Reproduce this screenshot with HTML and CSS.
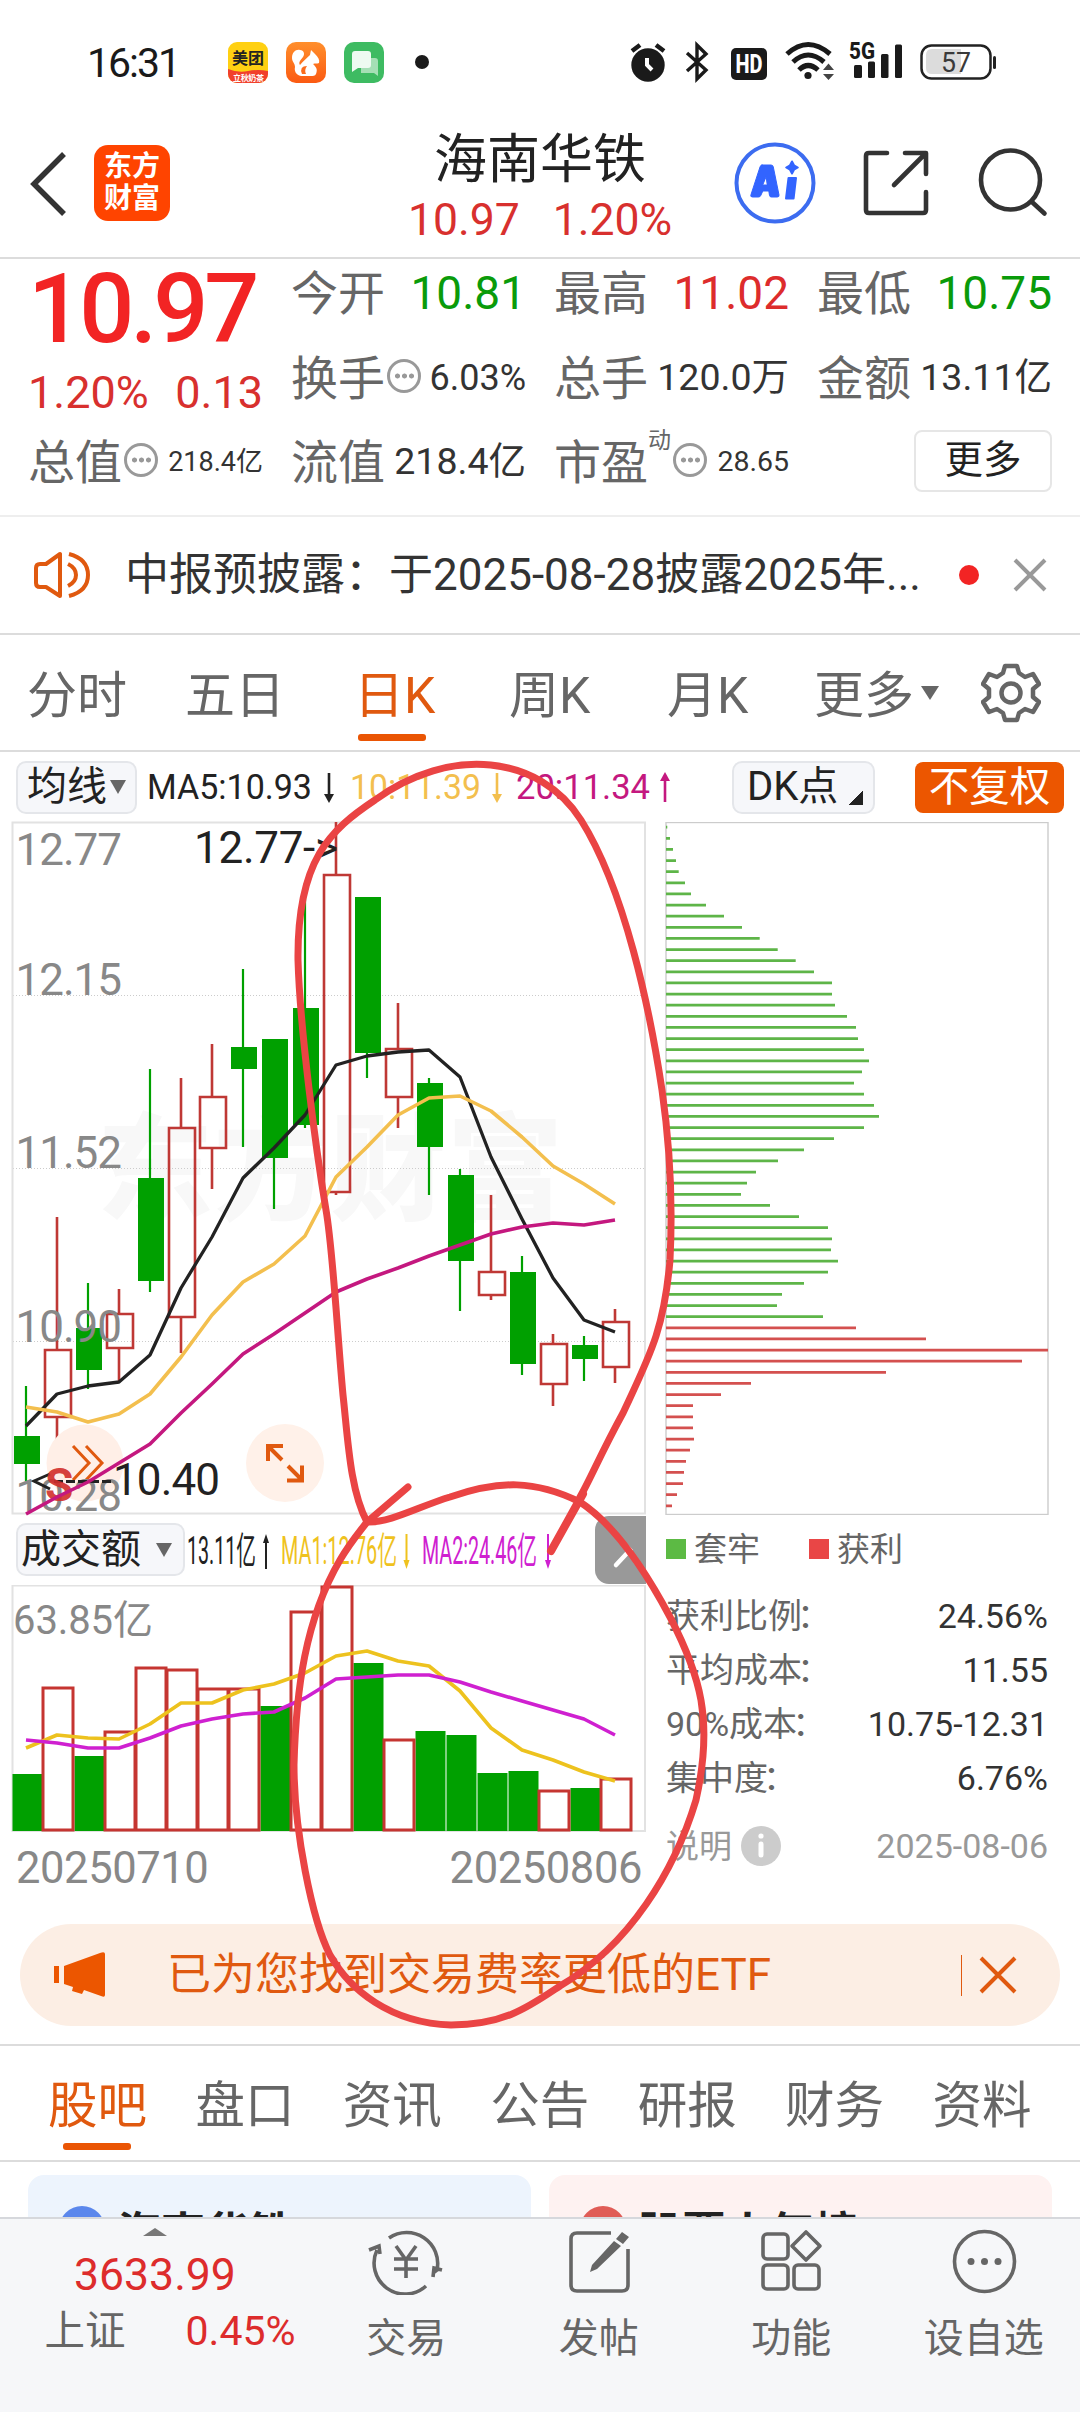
FILE: index.html
```html
<!DOCTYPE html>
<html lang="zh-CN">
<head>
<meta charset="utf-8">
<title>海南华铁 10.97 1.20%</title>
<link rel="stylesheet" href="styles.css">
</head>
<body>
<div class="screen">

<div class="status">
  <span class="clock">16:31</span>
  <svg class="notes" width="210" height="60" viewBox="220 32 210 60">
    <defs>
      <linearGradient id="uc" x1="0" x2="0" y1="0" y2="1"><stop offset="0" stop-color="#ff8f2c"/><stop offset="1" stop-color="#fb5a12"/></linearGradient>
      <clipPath id="mt"><rect x="228" y="42" width="40" height="41" rx="9"/></clipPath>
    </defs>
    <g clip-path="url(#mt)">
      <rect x="228" y="42" width="40" height="41" fill="#ffd012"/>
      <path d="M228 69q10 4 20 2t20 0v12h-40z" fill="#f1402c"/>
    </g>
    <text x="232" y="64" font-size="16" font-weight="700" textLength="32" fill="#222">美团</text>
    <text x="233" y="81" font-size="8" font-weight="700" textLength="31" fill="#fff">立秋奶茶</text>
    <rect x="286" y="42" width="40" height="41" rx="10" fill="url(#uc)"/>
    <path d="M292 58c0-6 4-9 8-8 4 0 5 4 3 7-2 3-5 5-3 8 3-4 7-7 10-10l1-5 4 4c3 3 5 6 4 9-2 1-4 0-6 1 3 3 5 5 3 10-1 2-3 2-5 2h-10c-5-1-7-5-6-9 0-4-3-5-3-9z" fill="#fff"/>
    <path d="M302 74q-3-8 5-8-3 4-1 8z" fill="#fb6c1c"/>
    <rect x="344" y="42" width="40" height="41" rx="10" fill="#3ebb62"/>
    <path d="M361 58h14a3 3 0 0 1 3 3v15l-4-3h-13z" fill="#a5dfb5"/>
    <path d="M355 51h13a3 3 0 0 1 3 3v11a3 3 0 0 1-3 3h-10l-6 4v-18a3 3 0 0 1 3-3z" fill="#eefaf1"/>
    <circle cx="422" cy="62" r="7" fill="#1a1a1a"/>
  </svg>
  <svg class="signals" width="380" height="60" viewBox="620 32 380 60">
    <g fill="#1a1a1a">
      <circle cx="648" cy="65" r="16.7"/>
      <path d="M632 51l8-6M664 51l-8-6" stroke="#1a1a1a" stroke-width="4.5" fill="none"/>
      <path d="M647 58v7l5 5" stroke="#fff" stroke-width="4" fill="none"/>
      <path d="M687 53l19 17-9 9V45l9 9-19 17" fill="none" stroke="#1a1a1a" stroke-width="3.4"/>
      <rect x="731" y="48" width="36" height="32" rx="5"/>
      <g fill="none" stroke="#1a1a1a" stroke-width="5"><path d="M787 54q21-19 43 0M793 62q15-14 31 0M799 70q9-9 19 0"/></g>
      <circle cx="808" cy="75.500" r="3.600"/>
      <path d="M823 70h11l-5.500-6.500zM823 74h11l-5.500 6z" fill="#444"/>
      <rect x="854" y="65" width="8" height="13" rx="1.500"/><rect x="868" y="61.500" width="7" height="16.500" rx="1.500"/><rect x="881" y="54" width="7.500" height="24" rx="1.500"/><rect x="895" y="44.500" width="7" height="33.500" rx="1.500"/>
    </g>
    <text x="735.500" y="73" font-size="25" font-weight="800" fill="#fff" textLength="27" lengthAdjust="spacingAndGlyphs">HD</text>
    <text x="849" y="59" font-size="23" font-weight="800" fill="#1a1a1a" textLength="26" lengthAdjust="spacingAndGlyphs">5G</text>
    <rect x="921.500" y="45.500" width="69" height="33" rx="10" fill="#fff" stroke="#222" stroke-width="2.500"/>
    <path d="M932 49h29v25h-29q-6 0-6-6v-13q0-6 6-6z" fill="#dcdcdc"/>
    <rect x="993" y="56" width="3" height="13" rx="1.500" fill="#222"/>
    <text x="941" y="72" font-size="27" fill="#3a3a3a" textLength="30" lengthAdjust="spacingAndGlyphs">57</text>
  </svg>
</div>

<header class="top">
  <svg class="back" width="42" height="70" viewBox="0 0 42 70"><path d="M36 5L6 35l30 30" fill="none" stroke="#333" stroke-width="5.500"/></svg>
  <div class="logo"><span>东方</span><span>财富</span></div>
  <div class="title"><h1>海南华铁</h1><p><span>10.97</span><span>1.20%</span></p></div>
  <svg class="tools" width="330" height="100" viewBox="730 133 330 100" fill="none" stroke-linecap="round" stroke-linejoin="round">
    <circle cx="775" cy="183" r="38.500" stroke="#3c6cf0" stroke-width="4"/>
    <path fill-rule="evenodd" d="M762 165h9q2 0 2.300 2l5.700 28q.3 2-1.700 2h-6q-1.500 0-1.800-1.600l-.7-4.400h-6l-2 4.400q-.6 1.600-2.300 1.600h-6q-2.500 0-1.500-2.400l9-27.600q.5-2 2-2zM766 177l-3.300 8h4.300z" fill="#3264ff" stroke="#3264ff"/>
    <path d="M788.500 178h7.500l-2.400 20.500h-7.600zM792 161.500l2 3.800 3.800 2.200-3.800 2.200-2 3.800-2-3.800-3.800-2.200 3.800-2.200z" fill="#3264ff" stroke="#3264ff" stroke-width="2"/>
    <path d="M887 153h-18q-3 0-3 3v54q0 3 3 3h54q3 0 3-3v-18M905 153h21v21M925 154l-31 31" stroke="#333" stroke-width="4.600"/>
    <circle cx="1010.500" cy="180" r="29.500" stroke="#333" stroke-width="4.600"/><path d="M1032 202l12.500 11.500" stroke="#333" stroke-width="4.600"/>
  </svg>
</header>

<section class="quote">
  <div class="price"><b>10.97</b><p><span>1.20%</span><span>0.13</span></p></div>
  <div class="cell"><label>今开</label><i class="down">10.81</i></div>
  <div class="cell"><label>最高</label><i class="up">11.02</i></div>
  <div class="cell"><label>最低</label><i class="down">10.75</i></div>
  <div class="cell"><label>换手</label><span class="tip"></span><i class="mid rate">6.03%</i></div>
  <div class="cell"><label>总手</label><i class="mid">120.0万</i></div>
  <div class="cell"><label>金额</label><i class="mid">13.11亿</i></div>
  <div class="cell"><label>总值</label><span class="tip"></span><i class="small">218.4亿</i></div>
  <div class="cell"><label>流值</label><i class="mid">218.4亿</i></div>
  <div class="cell"><label>市盈</label><sup>动</sup><span class="tip pe"></span><i class="small pe">28.65</i></div>
  <div class="cell end"><span class="more">更多</span></div>
</section>

<section class="notice">
  <svg width="58" height="48" viewBox="33 551 58 48" fill="none" stroke="#e0590f" stroke-width="4" stroke-linejoin="round"><path d="M60 554v42l-14-9h-6q-4 0-4-4v-15q0-4 4-4h6zM68 564q8 4 8 11t-8 11M69 554q19 5 19 21t-19 21"/></svg>
  <p>中报预披露：于2025-08-28披露2025年...</p>
  <span class="dot"></span>
  <svg class="x" width="34" height="34" viewBox="0 0 34 34"><path d="M2 2l30 30M32 2L2 32" stroke="#999" stroke-width="4"/></svg>
</section>

<nav class="periods">
  <span>分时</span><span>五日</span><span class="on">日K</span><span>周K</span><span>月K</span><span class="drop">更多</span>
  <svg width="60" height="60" viewBox="-30 -30 60 60" fill="none" stroke="#666" stroke-width="4.500" stroke-linejoin="round"><path d="M-6-27H6L8-20 14-16 22-19 28-9 22-4V4L28 9 22 19 14 16 8 20 6 27H-6L-8 20-14 16-22 19-28 9-22 4V-4L-28-9-22-19-14-16-8-20Z"/><circle r="9.500"/></svg>
</nav>

<section class="market">
<div class="indicators">
  <span class="pill ma">均线<em></em></span>
  <svg width="540" height="50" viewBox="140 762 540 50" font-size="35">
    <text x="147" y="799" fill="#222" textLength="165" lengthAdjust="spacingAndGlyphs">MA5:10.93</text>
    <text x="350" y="799" fill="#f3bf4e" textLength="131" lengthAdjust="spacingAndGlyphs">10:11.39</text>
    <text x="516" y="799" fill="#c4187f" textLength="134" lengthAdjust="spacingAndGlyphs">20:11.34</text>
    <g stroke-width="2.600"><path d="M329 773v23" stroke="#222"/><path d="M497 773v23" stroke="#f3bf4e"/><path d="M665 802v-23" stroke="#c4187f"/></g>
    <path d="M324 794h10l-5 9z" fill="#222"/><path d="M492 794h10l-5 9z" fill="#f3bf4e"/><path d="M660 781h10l-5-9z" fill="#c4187f"/>
  </svg>
  <span class="pill dk">DK点<em></em></span>
  <span class="fq">不复权</span>
</div>

<div class="panels">
<div class="left">
<svg class="kline" width="660" height="692" viewBox="0 822 660 692">
  <text x="97" y="1211" font-size="116" font-weight="900" fill="#f8f8f8" textLength="466">东方财富</text>
  <path d="M13 995.500h632M13 1168.500h632M13 1341.500h632" stroke="#ccc" stroke-width="1" stroke-dasharray="1 2"/>
  <rect x="12.500" y="822.500" width="632.500" height="691" fill="none" stroke="#e2e2e2" stroke-width="2"/>
  <g stroke="#00a000" stroke-width="2.200"><path d="M26 1386v95M88 1283v106M150 1069v223M243 969v178M274 1039v170M305 883v245M367 897v181M429 1078v117M460 1169v142M522 1256v119M584 1336v45"/></g>
  <g fill="#00a000"><path d="M14 1436h26v28H14zM76 1328h26v42H76zM138 1178h26v103h-26zM231 1047h26v22h-26zM262 1039h26v119h-26zM293 1008h26v117h-26zM355 897h26v156h-26zM417 1083h26v64h-26zM448 1175h26v86h-26zM510 1272h26v92h-26zM572 1345h26v14h-26z"/></g>
  <g stroke="#bf3835" stroke-width="2.600" fill="none"><path d="M57 1217v133M57 1417v44M119 1289v25M119 1348v34M181 1078v50M181 1317v36M212 1044v53M212 1148v41M336 822v52M336 1192v3M398 1003v46M398 1097v31M491 1195v77M491 1295v5M553 1334v10M553 1384v22M615 1309v13M615 1367v16"/>
  <path d="M45 1350h26v67H45zM107 1314h26v34h-26zM169 1128h26v189h-26zM200 1097h26v51h-26zM324 875h26v317h-26zM386 1049h26v48h-26zM479 1272h26v23h-26zM541 1344h26v40h-26zM603 1322h26v45h-26z"/></g>
  <circle cx="85" cy="1463" r="38.500" fill="#ffefe7"/><circle cx="285" cy="1463" r="39" fill="#fff1e9"/>
  <path d="M73 1446l16 17-16 17M86 1446l16 17-16 17" stroke="#e0590f" stroke-width="3" fill="none"/>
  <text x="15.500" y="865" class="ax">12.77</text><text x="15.500" y="995" class="ax">12.15</text><text x="15.500" y="1168" class="ax">11.52</text><text x="15.500" y="1342" class="ax">10.90</text><text x="15.500" y="1511" class="ax">10.28</text>
  <text x="194" y="863" font-size="44" fill="#222" textLength="144">12.77-&gt;</text>
  <path d="M50 1474l-16 7 16 8" fill="none" stroke="#222" stroke-width="3"/><path d="M54 1481.500h60" stroke="#222" stroke-width="3" stroke-dasharray="9 3"/>
  <text x="113" y="1495" font-size="44" fill="#222" textLength="107">10.40</text>
  <text x="45" y="1501" font-size="46" font-weight="700" fill="#d2302c" fill-opacity=".92">S</text>
  <g fill="none" stroke-width="3.600" stroke-linejoin="round">
  <polyline stroke="#222" stroke-width="3.300" points="26,1426 57,1394 88,1386 119,1382 150,1355 181,1288 212,1237 243,1178 274,1148 305,1115 336,1065 367,1056 398,1052 429,1050 460,1077 491,1157 522,1219 553,1278 584,1320 615,1332"/>
  <polyline stroke="#f3bf4e" points="26,1407 57,1412 88,1422 119,1414 150,1394 181,1357 212,1315 243,1282 274,1264 305,1236 336,1177 367,1147 398,1115 429,1098 460,1096 491,1111 522,1137 553,1166 584,1184 615,1204"/>
  <polyline stroke="#c4187f" points="26,1514 57,1497 88,1482 119,1463 150,1444 181,1413 212,1384 243,1354 274,1334 305,1313 336,1292 367,1279 398,1268 429,1256 460,1245 491,1234 522,1227 553,1223 584,1225 615,1220"/></g>
  <path d="M283 1446h-15v15M268 1446l14 14M288 1466l14 14M287 1480.500h15v-15" fill="none" stroke="#e0590f" stroke-width="4"/>
</svg>

<div class="volhead">
  <span class="pill vol">成交额<em></em></span>
  <svg width="370" height="50" viewBox="186 1524 370 50" font-size="38">
    <text x="187" y="1563" fill="#222" textLength="69" lengthAdjust="spacingAndGlyphs">13.11亿</text>
    <text x="281" y="1563" fill="#efc21e" textLength="116" lengthAdjust="spacingAndGlyphs">MA1:12.76亿</text>
    <text x="422" y="1563" fill="#cf20d0" textLength="115" lengthAdjust="spacingAndGlyphs">MA2:24.46亿</text>
    <g stroke-width="2"><path d="M266 1568v-28" stroke="#222"/><path d="M406.500 1533v28" stroke="#efc21e"/><path d="M548 1533v28" stroke="#cf20d0"/></g>
    <path d="M263 1542h6l-3-9z" fill="#222"/><path d="M403.500 1559h6l-3 9z" fill="#efc21e"/><path d="M545 1559h6l-3 9z" fill="#cf20d0"/>
  </svg>
  <span class="next"><svg width="24" height="38" viewBox="0 0 24 38"><path d="M4 4l14 15L4 34" fill="none" stroke="#fff" stroke-width="4.500" stroke-linecap="round"/></svg></span>
</div>

<svg class="volume" width="660" height="247" viewBox="0 1585 660 247">
  <rect x="12.500" y="1585.500" width="632.500" height="245.500" fill="none" stroke="#e2e2e2" stroke-width="2"/>
  <path fill="#00a000" d="M12.500 1774h30v57h-30zM74.500 1756h30v75h-30zM260.500 1706h30v125h-30zM353.500 1663h30v168h-30zM415.500 1731h30v100h-30zM446.500 1735h30v96h-30zM477.500 1773h30v58h-30zM508.500 1771h30v60h-30zM570.500 1788h30v43h-30z"/>
  <path fill="none" stroke="#c53531" stroke-width="3" d="M43 1688h30v142H43zM105 1732h30v98h-30zM136 1668h30v162h-30zM167 1670h30v160h-30zM198 1689h30v141h-30zM229 1689h30v141h-30zM291 1612h30v218h-30zM322 1587h30v243h-30zM384 1740h30v90h-30zM539 1791h30v39h-30zM601 1779h30v51h-30z"/>
  <text x="13" y="1634" font-size="40" fill="#888" textLength="140">63.85亿</text>
  <g fill="none" stroke-width="3.600" stroke-linejoin="round">
  <polyline stroke="#edc21e" points="26,1748 57,1735 88,1738 119,1739 150,1724 181,1703 212,1703 243,1690 274,1684 305,1673 336,1656 367,1651 398,1661 429,1666 460,1691 491,1728 522,1750 553,1760 584,1772 615,1781"/>
  <polyline stroke="#cf20d0" points="26,1740 57,1743 88,1748 119,1748 150,1738 181,1726 212,1719 243,1714 274,1712 305,1698 336,1679 367,1677 398,1675 429,1675 460,1682 491,1692 522,1701 553,1710 584,1719 615,1735"/></g>
</svg>
<div class="dates"><span>20250710</span><span>20250806</span></div>
</div>

<div class="right">
<svg width="400" height="693" viewBox="660 822 400 693">
  <rect x="666" y="822.500" width="382" height="692" fill="none" stroke="#ccc" stroke-width="1.400"/>
  <path fill="none" stroke="#5eb548" stroke-width="2.800" d="M666 827.200h1.300m-1.300 11.125h4m-4 11.125h7m-7 11.125h10m-10 11.125h12.700m-12.700 11.125h19m-19 11.125h25m-25 11.125h40m-40 11.125h58m-58 11.125h76m-76 11.125h93.700m-93.700 11.125h111.700m-111.700 11.125h129.700m-129.700 11.125h148m-148 11.125h166m-166 11.125h166m-166 11.125h169m-169 11.125h181m-181 11.125h190m-190 11.125h192m-192 11.125h198m-198 11.125h203m-203 11.125h196m-196 11.125h188m-188 11.125h198m-198 11.125h208m-208 11.125h213m-213 11.125h198m-198 11.125h168m-168 11.125h138m-138 11.125h112m-112 11.125h90m-90 11.125h81m-81 11.125h75m-75 11.125h104m-104 11.125h133m-133 11.125h162m-162 11.125h166m-166 11.125h165m-165 11.125h172m-172 11.125h162m-162 11.125h138m-138 11.125h116m-116 11.125h111m-111 11.125h157"/>
  <path fill="none" stroke="#d4504f" stroke-width="2.800" d="M666 1327.800h190m-190 11.125h260m-260 11.125h382m-382 11.125h356m-356 11.125h220m-220 11.125h85m-85 11.125h55m-55 11.125h27m-27 11.125h27m-27 11.125h27m-27 11.125h28m-28 11.125h24m-24 11.125h20m-20 11.125h18m-18 11.125h17m-17 11.125h11m-11 11.125h6"/>
</svg>
<div class="legend"><span><i class="g"></i>套牢</span><span><i class="r"></i>获利</span></div>
<dl>
  <div><dt>获利比例<s>：</s></dt><dd>24.56%</dd></div>
  <div><dt>平均成本<s>：</s></dt><dd>11.55</dd></div>
  <div><dt>90%成本<s>：</s></dt><dd>10.75-12.31</dd></div>
  <div><dt>集中度<s>：</s></dt><dd>6.76%</dd></div>
</dl>
<div class="explain"><span>说明</span><svg width="40" height="40" viewBox="-20 -20 40 40"><circle r="20" fill="#ccc"/><path d="M0-2v11" stroke="#fff" stroke-width="5" stroke-linecap="round"/><circle cy="-10" r="2.600" fill="#fff"/></svg><time>2025-08-06</time></div>
</div>
</div>
</section>

<section class="banner">
  <svg width="52" height="46" viewBox="0 0 52 46" fill="#ec5600"><path d="M0 14h5v17H0zM10 14L46 1q5-2 5 1v41q0 3-4 1l-17-6-2 4-10-3 1-4-9-3z"/></svg>
  <p>已为您找到交易费率更低的ETF</p>
  <span class="bar"></span>
  <svg class="x" width="38" height="38" viewBox="0 0 38 38"><path d="M2 2l34 34M36 2L2 36" stroke="#e0590f" stroke-width="4"/></svg>
</section>

<nav class="tabs"><span class="on">股吧</span><span>盘口</span><span>资讯</span><span>公告</span><span>研报</span><span>财务</span><span>资料</span></nav>

<section class="cards">
  <div class="card blue"><i></i>海南华铁</div>
  <div class="card red"><i></i>股票人气榜</div>
</section>

<footer class="dock">
  <div class="index"><em></em><strong>3633.99</strong><p><span>上证</span><b>0.45%</b></p></div>
  <div class="item"><svg width="76" height="68" viewBox="368 2229 76 68" fill="none" stroke="#666" stroke-width="3.600"><path d="M389 2240a31 31 0 0 1 48 32l-4 3M433 2279l1-9 8 2M426 2288a31 31 0 0 1-49-36M369 2252l10-4 1 8M396 2248l10 14 10-14M406 2262v18M394 2261h24M394 2271h24"/></svg><span>交易</span></div>
  <div class="item"><svg width="76" height="68" viewBox="560 2229 76 68" fill="none" stroke="#666" stroke-width="3.600"><path d="M610 2235h-34q-6 0-6 6v46q0 6 6 6h45q6 0 6-6v-36"/><path d="M621 2234l7 5-6 7-7-5zM613 2243l7 5-24 23-7 3 2-7z" fill="#666" stroke="none"/></svg><span>发帖</span></div>
  <div class="item"><svg width="76" height="68" viewBox="753 2229 76 68" fill="none" stroke="#666" stroke-width="3.600" stroke-linejoin="round"><rect x="763" y="2236" width="25" height="25" rx="4"/><rect x="763" y="2267" width="25" height="24" rx="4"/><rect x="794" y="2267" width="25" height="24" rx="4"/><path d="M806 2234l14 14-14 14-14-14z"/></svg><span>功能</span></div>
  <div class="item"><svg width="76" height="68" viewBox="945 2229 76 68"><circle cx="983.500" cy="2263.500" r="30" fill="none" stroke="#666" stroke-width="3.600"/><g fill="#666"><circle cx="970" cy="2263.500" r="3.500"/><circle cx="983.500" cy="2263.500" r="3.500"/><circle cx="997" cy="2263.500" r="3.500"/></g></svg><span>设自选</span></div>
</footer>

<svg class="ink" width="1080" height="2412" viewBox="0 0 1080 2412" fill="none" stroke="#ea4444" stroke-width="7" stroke-linecap="round" stroke-linejoin="round">
  <path d="M367 1522C350 1490 348 1440 343 1395C337 1330 333 1250 326 1210C316 1150 300 1030 298 960C297 860 330 830 375 800C450 745 540 755 581 820C625 890 650 1010 662 1090C672 1160 672 1220 670 1260C664 1330 650 1355 623 1413C600 1455 590 1480 580 1497"/>
  <path d="M367 1522L408 1487"/>
  <path d="M367 1522C390 1523 420 1506 450 1497C500 1480 535 1480 580 1502C615 1525 645 1570 670 1617C700 1675 714 1720 696 1800C675 1870 630 1945 560 1986C530 2006 505 2025 451 2025C390 2023 350 1990 330 1955C312 1920 294 1830 294 1765C296 1690 305 1620 340 1560C350 1543 357 1535 367 1522"/>
  <path d="M583 1494L551 1551L576 1506z" stroke-width="8"/>
</svg>
</div>
</body>
</html>
```
FILE: styles.css
```css
* { box-sizing: border-box; margin: 0; padding: 0; }
body { background: #fff; font-family: Roboto, "Noto Sans CJK SC", sans-serif; line-height: 1; color: #333; }
i, em { font-style: normal; }
svg { display: block; flex: none; }
.screen { position: relative; width: 1080px; height: 2412px; overflow: hidden; display: flex; flex-direction: column; white-space: nowrap; }
.screen > * { flex: none; }

.status { height: 94px; display: flex; align-items: flex-end; padding: 0 80px 2px 87px; }
.clock { font-size: 41px; letter-spacing: -2px; color: #1a1a1a; width: 133px; padding-bottom: 8px; }
.signals { margin-left: auto; }

.top { height: 165px; border-bottom: 2px solid #dcdcdc; display: flex; align-items: center; padding: 10px 20px 0 28px; }
.back { margin-right: 24px; margin-top: 6px; }
.logo { width: 76px; height: 76px; margin-top: 4px; border-radius: 14px; background: #ff4400; color: #fff; display: flex; flex-direction: column; align-items: center; justify-content: center; gap: 4px; font-size: 28px; font-weight: 700; }
.title { width: 560px; text-align: center; display: flex; flex-direction: column; gap: 11px; padding-left: 180px; margin-top: 16px; align-items: center; }
.title h1 { font-size: 53px; font-weight: 400; color: #222; }
.title p { display: flex; gap: 33px; font-size: 44.500px; color: #d8302e; }
.tools { margin-left: auto; margin-top: 4px; }

.quote { height: 258px; border-bottom: 2px solid #eee; display: grid; grid-template-columns: repeat(4, 235px); column-gap: 28px; grid-template-rows: 68px 102px 66px; padding-left: 28px; }
.price { grid-row: 1 / 3; color: #d8302e; }
.price b { display: block; font-size: 97px; font-weight: 500; letter-spacing: -4px; color: #f22424; margin-top: 2px; }
.price p { display: flex; justify-content: space-between; font-size: 45px; margin-top: 12px; }
.cell { display: flex; align-items: center; }
.cell label { font-size: 47px; color: #666; }
.cell i { margin-left: auto; font-size: 46px; color: #333; }
.cell .down { color: #0a9b0a; }
.cell .up { color: #dd2c2c; }
.cell .mid { font-size: 37.500px; }
.cell .rate { font-size: 36px; }
.cell .small { font-size: 27px; }
.cell .small.pe { font-size: 28.500px; }
.cell.end { justify-content: flex-end; }
.tip { width: 34px; height: 34px; border: 3px solid #999; border-radius: 50%; margin: -5px 0 0 2px; background: radial-gradient(circle at 50% 50%, #999 2.2px, transparent 2.8px) 0 0 / 7px 100% repeat-x content-box; padding: 0 3.500px; }
.cell sup { font-size: 23px; color: #666; align-self: flex-start; }
.tip.pe { margin-left: 2px; }
.more { width: 138px; height: 62px; border: 2px solid #e6e6e6; border-radius: 8px; margin-top: -3px; font-size: 38.500px; color: #222; display: flex; align-items: center; justify-content: center; }

.notice { height: 118px; border-bottom: 2px solid #dcdcdc; display: flex; align-items: center; padding-left: 33px; }
.notice p { font-size: 44px; margin-left: 34px; width: 834px; }
.dot { width: 20px; height: 20px; border-radius: 50%; background: #f22424; }
.notice .x { margin-left: 34px; }

.periods { height: 117px; border-bottom: 2px solid #dcdcdc; display: flex; align-items: center; padding-left: 27px; font-size: 50px; color: #666; }
.periods span { width: 160px; position: relative; top: 3px; }
.periods span:nth-child(1) { width: 158px; }
.periods span:nth-child(2) { width: 169px; }
.periods span:nth-child(3) { width: 155px; }
.periods span:nth-child(4) { width: 158px; }
.periods span:nth-child(5) { width: 147px; }
.periods span.drop { width: 167px; }
.periods .on, .tabs .on { color: #e0590f; }
.periods .on::after, .tabs .on::after { content: ""; position: absolute; left: 4px; bottom: -20px; width: 68px; height: 7px; border-radius: 3px; background: #ea5504; }
.drop::after { content: ""; position: absolute; left: 107px; top: 15px; border: 9px solid transparent; border-top: 14px solid #666; border-bottom: 0; }

.market { height: 1172px; }
.indicators { height: 70px; display: flex; align-items: center; padding-left: 16px; }
.pill { height: 53px; background: #f6f7fa; border: 2px solid #e4e6ea; border-radius: 10px; color: #222; font-size: 40px; display: flex; align-items: center; padding-left: 9px; }
.ma { width: 121px; }
.indicators svg { margin: -1px 0 0 3px; }
.pill em { border: 8px solid transparent; border-top: 14px solid #666; border-bottom: 0; margin-left: 3px; }
.dk { width: 143px; padding-left: 13px; margin-left: 52px; }
.dk em { border: 0; width: 15px; height: 14px; background: linear-gradient(135deg, transparent 50%, #222 50%); margin: 22px 0 0 10px; }
.fq { width: 149px; height: 51px; margin-left: 40px; border-radius: 8px; background: #ec5600; color: #fff; font-size: 40.500px; display: flex; align-items: center; justify-content: center; }
.panels { display: flex; }
.left, .right { display: flex; flex-direction: column; }
.kline .ax { font-size: 44px; fill: #888; letter-spacing: -1px; }
.kline { overflow: visible; }
.volhead { height: 71px; display: flex; align-items: center; width: 646px; padding-left: 16px; }
.vol { width: 169px; padding-left: 3px; }
.vol em { margin-left: 15px; }
.volhead > svg { margin-left: 1px; }
.next { margin-left: auto; align-self: flex-start; margin-top: 2px; width: 51px; height: 68px; border-radius: 14px 0 0 14px; background: #999; display: flex; align-items: center; padding-left: 17px; }
.dates { display: flex; justify-content: space-between; width: 642px; padding: 15px 0 0 16px; font-size: 43.500px; color: #888; letter-spacing: -.4px; }

.right { width: 400px; }
.legend { height: 68px; display: flex; align-items: center; padding-left: 6px; font-size: 33px; color: #666; gap: 49px; }
.legend span { display: flex; align-items: center; gap: 8px; }
.legend i { width: 20px; height: 20px; background: #5cba44; }
.legend .r { background: #e94646; }
dl { padding: 6px 12px 0 6px; }
dl div { height: 54px; display: flex; justify-content: space-between; align-items: center; font-size: 34px; }
dt { color: #666; }
dt s { text-decoration: none; margin-left: -5px; }
.explain { height: 54px; margin-top: 14px; display: flex; align-items: center; padding: 0 12px 0 6px; font-size: 33px; color: #999; gap: 9px; }
.explain time { margin-left: auto; font-size: 34px; }

.banner { height: 102px; width: 1040px; margin: 0 20px; border-radius: 51px; background: #fceee4; display: flex; align-items: center; padding-left: 34px; color: #e0590f; }
.banner p { font-size: 44px; margin-left: 61px; width: 794px; }
.banner .bar { width: 1px; height: 41px; background: #e0590f; }
.banner .x { margin-left: 17px; }

.tabs { height: 118px; margin-top: 18px; border-top: 2px solid #dcdcdc; border-bottom: 2px solid #dcdcdc; display: flex; align-items: center; padding: 7px 0 0 48px; font-size: 49.500px; color: #666; }
.tabs span { width: 147.500px; position: relative; }
.tabs .on::after { left: 15px; bottom: -19px; }

.cards { height: 55px; padding: 13px 28px 0; display: flex; gap: 18px; overflow: hidden; }
.card { width: 504px; height: 120px; border-radius: 16px; background: #edf4fd; display: flex; align-items: flex-start; padding: 37px 0 0 31px; gap: 12px; font-size: 44px; font-weight: 700; color: #222; }
.card i { width: 46px; height: 46px; border-radius: 50%; background: #5b87ec; margin-top: -6px; }
.card.red { background: #fef2f1; }
.card.red i { background: #e05c56; }

.dock { height: 195px; background: #f6f7f9; border-top: 2px solid #d6d8dc; display: flex; }
.index { width: 310px; display: flex; flex-direction: column; align-items: center; padding-top: 9px; color: #dd2c2c; }
.index em { border: 12px solid transparent; border-bottom: 8px solid #777; border-top: 0; }
.index strong { font-size: 44.500px; font-weight: 400; margin-top: 17px; }
.index p { width: 251px; margin: 13px 0 0 30px; display: flex; justify-content: space-between; font-size: 41px; }
.index p b { font-weight: 400; }
.index p span { color: #666; font-size: 40.500px; }
.item { width: 192.500px; display: flex; flex-direction: column; align-items: center; padding-top: 8px; font-size: 40px; color: #666; }
.item span { margin-top: 24px; }

.ink { position: absolute; left: 0; top: 0; pointer-events: none; }
```
